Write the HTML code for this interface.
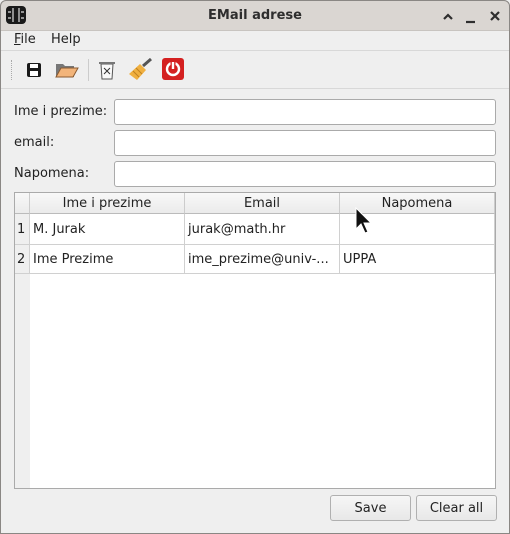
<!DOCTYPE html><html><head><style>
body{margin:0;width:510px;height:534px;overflow:hidden;font-family:"DejaVu Sans","Liberation Sans",sans-serif;font-size:13px;color:#222;background:#efefef;position:relative}
.a{position:absolute}
.brd{position:absolute;left:0;top:0;width:508px;height:532px;border:1px solid #8a8784;border-radius:6px 6px 0 0;z-index:10;pointer-events:none}
.inp{position:absolute;left:114px;width:380px;height:24px;background:#fff;border:1px solid #aaa;border-radius:3px}
.lbl{position:absolute;left:14px}
.btn{position:absolute;top:495px;height:24px;border:1px solid #b0b0b0;border-radius:3px;background:linear-gradient(#f6f6f6,#e8e8e8);text-align:center;line-height:25px}
.cell{position:absolute;border-right:1px solid #d0d0d0;border-bottom:1px solid #d0d0d0;line-height:32px;padding-left:3px;box-sizing:border-box;white-space:nowrap;overflow:hidden}
.hd{position:absolute;top:0;height:21px;border-right:1px solid #ccc;border-bottom:1px solid #bbb;text-align:center;line-height:22px;box-sizing:border-box;background:linear-gradient(#f8f8f8,#ebebeb)}
</style></head><body>
<div class="a" style="left:0;top:0;width:510px;height:30px;background:#dad6d2;border-bottom:1px solid #c8c4c0;border-radius:6px 6px 0 0"></div>
<div class="brd"></div>
<svg class="a" style="left:5px;top:5px" width="22" height="20"><rect x="1" y="1" width="20" height="18" rx="4" fill="#1a1a1a"/><path d="M8 3v14M14 3v14M3 7h3M3 13h3M16 7h3M16 13h3" stroke="#ddd" stroke-width="1.2"/></svg>
<div class="a" style="left:0;width:510px;top:8px;text-align:center;font-weight:bold;color:#2e2e2e">EMail adrese</div>
<svg class="a" style="left:440px;top:9px" width="60" height="16"><path d="M4 10l4-4 4 4" stroke="#2e2e2e" stroke-width="2.2" fill="none"/><path d="M26 13h9" stroke="#2e2e2e" stroke-width="2.2"/><path d="M51 3l8 8M59 3l-8 8" stroke="#2e2e2e" stroke-width="2.2"/></svg>
<div class="a" style="left:14px;top:32px"><u>F</u>ile</div><div class="a" style="left:51px;top:32px">Help</div>
<div class="a" style="left:0;top:50px;width:510px;border-top:1px solid #d8d8d8"></div>
<div class="a" style="left:11px;top:60px;width:2px;height:20px;border-left:1px dotted #aaa"></div>
<svg class="a" style="left:25px;top:61px" width="18" height="18"><rect x="2" y="2" width="14" height="14" rx="2" fill="#1a1a1a"/><rect x="5" y="3" width="8" height="4" fill="#fff"/><rect x="5" y="10" width="8" height="5" fill="#fff"/></svg>
<svg class="a" style="left:54px;top:61px" width="26" height="18"><path d="M2 3h7l2 2h9v11H2z" fill="#777"/><path d="M2 16l5-9h17l-5 9z" fill="#f2b47a" stroke="#8a5a30"/></svg>
<div class="a" style="left:88px;top:59px;height:22px;border-left:1px solid #ccc"></div>
<svg class="a" style="left:96px;top:58px" width="22" height="22"><path d="M5 6h12l-1 15H6z" fill="#fafafa" stroke="#555"/><rect x="3" y="4" width="16" height="2" fill="#777"/><path d="M8 10l6 6M14 10l-6 6" stroke="#333"/></svg>
<svg class="a" style="left:127px;top:58px" width="26" height="24"><path d="M16 8l8-7" stroke="#555" stroke-width="3"/><path d="M13 6l6 6-9 10-8-6z" fill="#f0b040"/><path d="M6 13l6 6M9 10l6 6" stroke="#c08020"/></svg>
<svg class="a" style="left:161px;top:57px" width="24" height="24"><rect x="1" y="1" width="22" height="22" rx="3" fill="#d42020"/><circle cx="12" cy="12" r="6" stroke="#fff" stroke-width="2.4" fill="none"/><path d="M12 4v8" stroke="#d42020" stroke-width="5"/><path d="M12 5v7" stroke="#fff" stroke-width="2.4"/></svg>
<div class="a" style="left:0;top:88px;width:510px;border-top:1px solid #d8d8d8"></div>
<div class="lbl" style="top:104px">Ime i prezime:</div><div class="inp" style="top:99px"></div>
<div class="lbl" style="top:135px">email:</div><div class="inp" style="top:130px"></div>
<div class="lbl" style="top:166px">Napomena:</div><div class="inp" style="top:161px"></div>
<div class="a" style="left:14px;top:192px;width:480px;height:295px;border:1px solid #aaa;background:#fff;overflow:hidden">
<div class="a" style="left:0;top:0;width:15px;height:295px;background:#efefef"></div>
<div class="hd" style="left:0;width:15px"></div>
<div class="hd" style="left:15px;width:155px">Ime i prezime</div>
<div class="hd" style="left:170px;width:155px">Email</div>
<div class="hd" style="left:325px;width:155px">Napomena</div>
<div class="cell" style="left:0;top:21px;width:15px;height:31px;background:#efefef;padding-left:2px">1</div>
<div class="cell" style="left:15px;top:21px;width:155px;height:31px">M. Jurak</div>
<div class="cell" style="left:170px;top:21px;width:155px;height:31px">jurak@math.hr</div>
<div class="cell" style="left:325px;top:21px;width:155px;height:31px"></div>
<div class="cell" style="left:0;top:52px;width:15px;height:29px;line-height:30px;background:#efefef;padding-left:2px">2</div>
<div class="cell" style="left:15px;top:52px;width:155px;height:29px;line-height:30px">Ime Prezime</div>
<div class="cell" style="left:170px;top:52px;width:155px;height:29px;line-height:30px">ime_prezime@univ-...</div>
<div class="cell" style="left:325px;top:52px;width:155px;height:29px;line-height:30px">UPPA</div>
</div>
<svg class="a" style="left:355px;top:207px" width="18" height="28"><path d="M1 1v21l5-5 4 9 3-1-4-9h7z" fill="#111" stroke="#fff"/></svg>
<div class="btn" style="left:330px;width:79px">Save</div>
<div class="btn" style="left:416px;width:79px">Clear all</div>
</body></html>
